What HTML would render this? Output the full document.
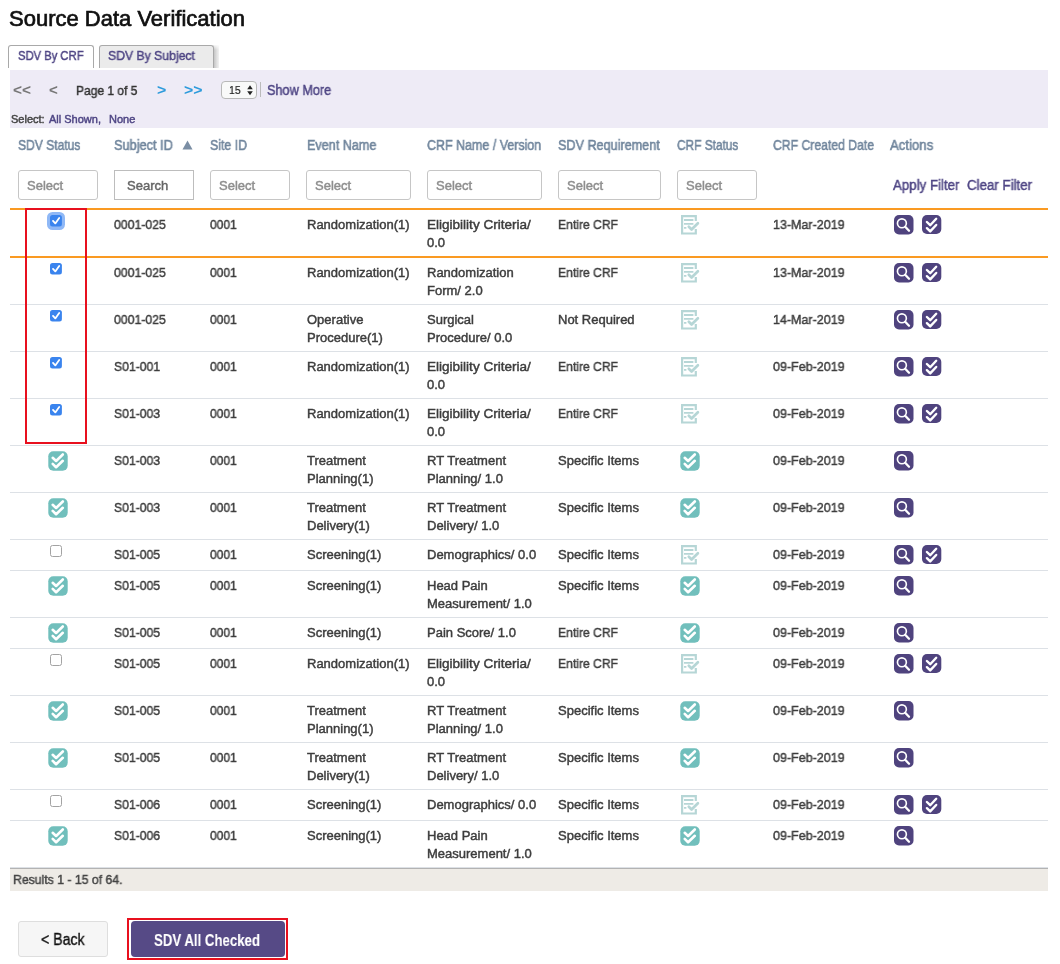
<!DOCTYPE html><html><head><meta charset="utf-8"><style>
html,body{margin:0;padding:0;background:#fff;width:1060px;height:964px;overflow:hidden;position:relative;font-family:"Liberation Sans", sans-serif;}
.t{position:absolute;white-space:nowrap;will-change:transform;}
.b{position:absolute;box-sizing:border-box;}
svg{position:absolute;}
</style></head><body>
<div class="t" style="left:8.6px;top:8.50px;font-size:22px;line-height:20px;color:#111;font-weight:400;-webkit-text-stroke:0.7px #111;">Source Data Verification</div>
<div class="b" style="left:8px;top:45px;width:86px;height:23px;background:#fff;border:1px solid #a9a9a9;border-bottom:none;border-radius:3px 3px 0 0;"></div>
<div class="t" style="left:17.8px;top:46.20px;font-size:13px;line-height:20px;color:#4e4584;font-weight:400;transform:scaleX(0.864);transform-origin:0 0;-webkit-text-stroke:0.45px #4e4584;">SDV By CRF</div>
<div class="b" style="left:213px;top:45px;width:6px;height:23px;background:linear-gradient(to right,#bcbcbc,#dedede 60%,#f2f2f2);"></div>
<div class="b" style="left:213px;top:45px;width:6px;height:5px;background:linear-gradient(to bottom,rgba(255,255,255,0.85),rgba(255,255,255,0));"></div>
<div class="b" style="left:99px;top:45px;width:115px;height:23px;background:#ebebeb;border:1px solid #a9a9a9;border-bottom:none;border-radius:3px 3px 0 0;"></div>
<div class="t" style="left:108.3px;top:46.20px;font-size:13px;line-height:20px;color:#4e4584;font-weight:400;transform:scaleX(0.94);transform-origin:0 0;-webkit-text-stroke:0.45px #4e4584;">SDV By Subject</div>
<div class="b" style="left:10px;top:70px;width:1038px;height:58px;background:#eeebf6;"></div>
<div class="t" style="left:12.7px;top:80.00px;font-size:14px;line-height:20px;color:#777;font-weight:700;transform:scaleX(1.1003);transform-origin:0 0;">&lt;&lt;</div>
<div class="t" style="left:49.1px;top:80.00px;font-size:14px;line-height:20px;color:#777;font-weight:700;transform:scaleX(1.0748);transform-origin:0 0;">&lt;</div>
<div class="t" style="left:76.4px;top:80.50px;font-size:13px;line-height:20px;color:#333;font-weight:400;transform:scaleX(0.923);transform-origin:0 0;-webkit-text-stroke:0.45px #333;">Page 1 of 5</div>
<div class="t" style="left:156.6px;top:80.00px;font-size:14px;line-height:20px;color:#2d9bdc;font-weight:700;transform:scaleX(1.1359);transform-origin:0 0;">&gt;</div>
<div class="t" style="left:183.6px;top:80.00px;font-size:14px;line-height:20px;color:#2d9bdc;font-weight:700;transform:scaleX(1.1309);transform-origin:0 0;">&gt;&gt;</div>
<div class="b" style="left:220.5px;top:81px;width:36px;height:17.5px;background:#f9f9f9;border:1px solid #b8b8b8;border-radius:4px;"></div>
<div class="t" style="left:229px;top:79.80px;font-size:11.5px;line-height:20px;color:#222;font-weight:400;transform:scaleX(0.9065);transform-origin:0 0;-webkit-text-stroke:0.2px #222;">15</div>
<svg style="left:246.5px;top:84.5px" width="7" height="11" viewBox="0 0 7 11"><path d="M3 0.3 L5.8 4.2 L0.2 4.2Z M3 10.3 L5.8 6.2 L0.2 6.2Z" fill="#222"/></svg>
<div class="b" style="left:260px;top:82px;width:1px;height:15px;background:#bbb;"></div>
<div class="t" style="left:267px;top:80.00px;font-size:14px;line-height:20px;color:#4e4584;font-weight:400;transform:scaleX(0.907);transform-origin:0 0;-webkit-text-stroke:0.45px #4e4584;">Show More</div>
<div class="t" style="left:10.6px;top:109.10px;font-size:11px;line-height:20px;color:#444;font-weight:400;-webkit-text-stroke:0.45px #444;">Select:</div>
<div class="t" style="left:48.6px;top:109.10px;font-size:11px;line-height:20px;color:#4e4584;font-weight:400;-webkit-text-stroke:0.45px #4e4584;">All Shown,</div>
<div class="t" style="left:109.2px;top:109.10px;font-size:11px;line-height:20px;color:#4e4584;font-weight:400;-webkit-text-stroke:0.45px #4e4584;">None</div>
<div class="t" style="left:18.15px;top:135.20px;font-size:14px;line-height:20px;color:#71869d;font-weight:400;transform:scaleX(0.8622);transform-origin:0 0;-webkit-text-stroke:0.55px #71869d;">SDV Status</div>
<div class="t" style="left:114.2px;top:135.20px;font-size:14px;line-height:20px;color:#71869d;font-weight:400;transform:scaleX(0.9119);transform-origin:0 0;-webkit-text-stroke:0.55px #71869d;">Subject ID</div>
<div class="t" style="left:210.2px;top:135.20px;font-size:14px;line-height:20px;color:#71869d;font-weight:400;transform:scaleX(0.8806);transform-origin:0 0;-webkit-text-stroke:0.55px #71869d;">Site ID</div>
<div class="t" style="left:306.8px;top:135.20px;font-size:14px;line-height:20px;color:#71869d;font-weight:400;transform:scaleX(0.9008);transform-origin:0 0;-webkit-text-stroke:0.55px #71869d;">Event Name</div>
<div class="t" style="left:426.6px;top:135.20px;font-size:14px;line-height:20px;color:#71869d;font-weight:400;transform:scaleX(0.8896);transform-origin:0 0;-webkit-text-stroke:0.55px #71869d;">CRF Name / Version</div>
<div class="t" style="left:558.3px;top:135.20px;font-size:14px;line-height:20px;color:#71869d;font-weight:400;transform:scaleX(0.9014);transform-origin:0 0;-webkit-text-stroke:0.55px #71869d;">SDV Requirement</div>
<div class="t" style="left:677.2px;top:135.20px;font-size:14px;line-height:20px;color:#71869d;font-weight:400;transform:scaleX(0.8472);transform-origin:0 0;-webkit-text-stroke:0.55px #71869d;">CRF Status</div>
<div class="t" style="left:772.6px;top:135.20px;font-size:14px;line-height:20px;color:#71869d;font-weight:400;transform:scaleX(0.8712);transform-origin:0 0;-webkit-text-stroke:0.55px #71869d;">CRF Created Date</div>
<div class="t" style="left:890px;top:135.20px;font-size:14px;line-height:20px;color:#71869d;font-weight:400;transform:scaleX(0.9407);transform-origin:0 0;-webkit-text-stroke:0.55px #71869d;">Actions</div>
<svg style="left:182px;top:140px" width="11" height="10" viewBox="0 0 11 10"><path d="M5.5 0.5 L10.5 9.5 L0.5 9.5Z" fill="#7b8ea4"/></svg>
<div class="b" style="left:18px;top:170px;width:80px;height:30px;background:#fff;border:1px solid #c6c6c6;border-radius:3px;"></div>
<div class="t" style="left:27px;top:176.00px;font-size:13px;line-height:20px;color:#8e8e8e;font-weight:400;-webkit-text-stroke:0.45px #8e8e8e;">Select</div>
<div class="b" style="left:114px;top:170px;width:80px;height:30px;background:#fff;border:1px solid #bdbdbd;"></div>
<div class="t" style="left:127px;top:175.50px;font-size:13px;line-height:20px;color:#666;font-weight:400;-webkit-text-stroke:0.45px #666;">Search</div>
<div class="b" style="left:210px;top:170px;width:80px;height:30px;background:#fff;border:1px solid #c6c6c6;border-radius:3px;"></div>
<div class="t" style="left:219px;top:176.00px;font-size:13px;line-height:20px;color:#8e8e8e;font-weight:400;-webkit-text-stroke:0.45px #8e8e8e;">Select</div>
<div class="b" style="left:306px;top:170px;width:105px;height:30px;background:#fff;border:1px solid #c6c6c6;border-radius:3px;"></div>
<div class="t" style="left:315px;top:176.00px;font-size:13px;line-height:20px;color:#8e8e8e;font-weight:400;-webkit-text-stroke:0.45px #8e8e8e;">Select</div>
<div class="b" style="left:427px;top:170px;width:115px;height:30px;background:#fff;border:1px solid #c6c6c6;border-radius:3px;"></div>
<div class="t" style="left:436px;top:176.00px;font-size:13px;line-height:20px;color:#8e8e8e;font-weight:400;-webkit-text-stroke:0.45px #8e8e8e;">Select</div>
<div class="b" style="left:558px;top:170px;width:103px;height:30px;background:#fff;border:1px solid #c6c6c6;border-radius:3px;"></div>
<div class="t" style="left:567px;top:176.00px;font-size:13px;line-height:20px;color:#8e8e8e;font-weight:400;-webkit-text-stroke:0.45px #8e8e8e;">Select</div>
<div class="b" style="left:677px;top:170px;width:80px;height:30px;background:#fff;border:1px solid #c6c6c6;border-radius:3px;"></div>
<div class="t" style="left:686px;top:176.00px;font-size:13px;line-height:20px;color:#8e8e8e;font-weight:400;-webkit-text-stroke:0.45px #8e8e8e;">Select</div>
<div class="t" style="left:892.5px;top:175.40px;font-size:14px;line-height:20px;color:#4e4584;font-weight:400;transform:scaleX(0.949);transform-origin:0 0;-webkit-text-stroke:0.45px #4e4584;">Apply Filter</div>
<div class="t" style="left:967.3px;top:175.40px;font-size:14px;line-height:20px;color:#4e4584;font-weight:400;transform:scaleX(0.95);transform-origin:0 0;-webkit-text-stroke:0.45px #4e4584;">Clear Filter</div>
<div class="b" style="left:47.1px;top:212.2px;width:18px;height:18px;background:#8fb8f6;border-radius:5.5px;"></div>
<svg style="left:50.2px;top:215.3px" width="12" height="12" viewBox="0 0 12 12"><rect x="0" y="0" width="11.9" height="11.6" rx="2.5" fill="#3a84ee"/><path d="M3 5.9 L5.3 8.4 L9.2 2.9" stroke="#fff" stroke-width="1.8" fill="none" stroke-linecap="round" stroke-linejoin="round"/></svg>
<div class="t" style="left:114.4px;top:214.50px;font-size:13px;line-height:20px;color:#3d3d3d;font-weight:400;transform:scaleX(0.9426);transform-origin:0 0;-webkit-text-stroke:0.45px #3d3d3d;">0001-025</div>
<div class="t" style="left:210.2px;top:214.50px;font-size:13px;line-height:20px;color:#3d3d3d;font-weight:400;transform:scaleX(0.9232);transform-origin:0 0;-webkit-text-stroke:0.45px #3d3d3d;">0001</div>
<div class="t" style="left:306.5px;top:214.50px;font-size:13px;line-height:20px;color:#3d3d3d;font-weight:400;-webkit-text-stroke:0.45px #3d3d3d;">Randomization(1)</div>
<div class="t" style="left:426.7px;top:214.50px;font-size:13px;line-height:20px;color:#3d3d3d;font-weight:400;transform:scaleX(1.0411);transform-origin:0 0;-webkit-text-stroke:0.45px #3d3d3d;">Eligibility Criteria/</div>
<div class="t" style="left:426.7px;top:232.50px;font-size:13px;line-height:20px;color:#3d3d3d;font-weight:400;-webkit-text-stroke:0.45px #3d3d3d;">0.0</div>
<div class="t" style="left:558px;top:214.50px;font-size:13px;line-height:20px;color:#3d3d3d;font-weight:400;transform:scaleX(0.9332);transform-origin:0 0;-webkit-text-stroke:0.45px #3d3d3d;">Entire CRF</div>
<svg style="left:681.3px;top:215.3px" width="20" height="20" viewBox="0 0 20 20"><path d="M14.8 6 V1.1 H1.1 V18.5 H14.8 V14" stroke="#b6d6d6" stroke-width="2.2" fill="none"/><path d="M3 5 H12.4 M3 8.9 H12.4 M3 12.8 H5.4" stroke="#b6d6d6" stroke-width="1.8"/><path d="M7.8 11.7 L10.6 14.5 L16.9 8.2" stroke="#b6d6d6" stroke-width="2.7" fill="none" stroke-linecap="round" stroke-linejoin="round"/></svg>
<div class="t" style="left:772.9px;top:214.50px;font-size:13px;line-height:20px;color:#3d3d3d;font-weight:400;transform:scaleX(0.9619);transform-origin:0 0;-webkit-text-stroke:0.45px #3d3d3d;">13-Mar-2019</div>
<svg style="left:894px;top:215.2px" width="20" height="20" viewBox="0 0 20 20"><rect x="0" y="0" width="19.5" height="19.5" rx="5" fill="#4f437e"/><circle cx="7.9" cy="8.3" r="4.45" stroke="#fff" stroke-width="1.65" fill="none"/><path d="M11.2 11.8 L15 15.7" stroke="#fff" stroke-width="2.3" stroke-linecap="round"/></svg>
<svg style="left:922.4px;top:215.2px" width="20" height="20" viewBox="0 0 20 20"><rect x="0" y="0" width="19.3" height="19" rx="5" fill="#4f437e"/><path d="M4.9 7 L8.2 10.2 L14.2 3.8 M4.9 13.2 L8.2 16.4 L14.2 10" stroke="#fff" stroke-width="2.4" fill="none" stroke-linecap="round" stroke-linejoin="round"/></svg>
<svg style="left:50.2px;top:263.3px" width="12" height="12" viewBox="0 0 12 12"><rect x="0" y="0" width="11.9" height="11.6" rx="2.5" fill="#3a84ee"/><path d="M3 5.9 L5.3 8.4 L9.2 2.9" stroke="#fff" stroke-width="1.8" fill="none" stroke-linecap="round" stroke-linejoin="round"/></svg>
<div class="t" style="left:114.4px;top:262.50px;font-size:13px;line-height:20px;color:#3d3d3d;font-weight:400;transform:scaleX(0.9426);transform-origin:0 0;-webkit-text-stroke:0.45px #3d3d3d;">0001-025</div>
<div class="t" style="left:210.2px;top:262.50px;font-size:13px;line-height:20px;color:#3d3d3d;font-weight:400;transform:scaleX(0.9232);transform-origin:0 0;-webkit-text-stroke:0.45px #3d3d3d;">0001</div>
<div class="t" style="left:306.5px;top:262.50px;font-size:13px;line-height:20px;color:#3d3d3d;font-weight:400;-webkit-text-stroke:0.45px #3d3d3d;">Randomization(1)</div>
<div class="t" style="left:426.7px;top:262.50px;font-size:13px;line-height:20px;color:#3d3d3d;font-weight:400;-webkit-text-stroke:0.45px #3d3d3d;">Randomization</div>
<div class="t" style="left:426.7px;top:280.50px;font-size:13px;line-height:20px;color:#3d3d3d;font-weight:400;-webkit-text-stroke:0.45px #3d3d3d;">Form/ 2.0</div>
<div class="t" style="left:558px;top:262.50px;font-size:13px;line-height:20px;color:#3d3d3d;font-weight:400;transform:scaleX(0.9332);transform-origin:0 0;-webkit-text-stroke:0.45px #3d3d3d;">Entire CRF</div>
<svg style="left:681.3px;top:263.3px" width="20" height="20" viewBox="0 0 20 20"><path d="M14.8 6 V1.1 H1.1 V18.5 H14.8 V14" stroke="#b6d6d6" stroke-width="2.2" fill="none"/><path d="M3 5 H12.4 M3 8.9 H12.4 M3 12.8 H5.4" stroke="#b6d6d6" stroke-width="1.8"/><path d="M7.8 11.7 L10.6 14.5 L16.9 8.2" stroke="#b6d6d6" stroke-width="2.7" fill="none" stroke-linecap="round" stroke-linejoin="round"/></svg>
<div class="t" style="left:772.9px;top:262.50px;font-size:13px;line-height:20px;color:#3d3d3d;font-weight:400;transform:scaleX(0.9619);transform-origin:0 0;-webkit-text-stroke:0.45px #3d3d3d;">13-Mar-2019</div>
<svg style="left:894px;top:263.2px" width="20" height="20" viewBox="0 0 20 20"><rect x="0" y="0" width="19.5" height="19.5" rx="5" fill="#4f437e"/><circle cx="7.9" cy="8.3" r="4.45" stroke="#fff" stroke-width="1.65" fill="none"/><path d="M11.2 11.8 L15 15.7" stroke="#fff" stroke-width="2.3" stroke-linecap="round"/></svg>
<svg style="left:922.4px;top:263.2px" width="20" height="20" viewBox="0 0 20 20"><rect x="0" y="0" width="19.3" height="19" rx="5" fill="#4f437e"/><path d="M4.9 7 L8.2 10.2 L14.2 3.8 M4.9 13.2 L8.2 16.4 L14.2 10" stroke="#fff" stroke-width="2.4" fill="none" stroke-linecap="round" stroke-linejoin="round"/></svg>
<svg style="left:50.2px;top:310.3px" width="12" height="12" viewBox="0 0 12 12"><rect x="0" y="0" width="11.9" height="11.6" rx="2.5" fill="#3a84ee"/><path d="M3 5.9 L5.3 8.4 L9.2 2.9" stroke="#fff" stroke-width="1.8" fill="none" stroke-linecap="round" stroke-linejoin="round"/></svg>
<div class="t" style="left:114.4px;top:309.50px;font-size:13px;line-height:20px;color:#3d3d3d;font-weight:400;transform:scaleX(0.9426);transform-origin:0 0;-webkit-text-stroke:0.45px #3d3d3d;">0001-025</div>
<div class="t" style="left:210.2px;top:309.50px;font-size:13px;line-height:20px;color:#3d3d3d;font-weight:400;transform:scaleX(0.9232);transform-origin:0 0;-webkit-text-stroke:0.45px #3d3d3d;">0001</div>
<div class="t" style="left:306.5px;top:309.50px;font-size:13px;line-height:20px;color:#3d3d3d;font-weight:400;-webkit-text-stroke:0.45px #3d3d3d;">Operative</div>
<div class="t" style="left:306.5px;top:327.50px;font-size:13px;line-height:20px;color:#3d3d3d;font-weight:400;-webkit-text-stroke:0.45px #3d3d3d;">Procedure(1)</div>
<div class="t" style="left:426.7px;top:309.50px;font-size:13px;line-height:20px;color:#3d3d3d;font-weight:400;-webkit-text-stroke:0.45px #3d3d3d;">Surgical</div>
<div class="t" style="left:426.7px;top:327.50px;font-size:13px;line-height:20px;color:#3d3d3d;font-weight:400;-webkit-text-stroke:0.45px #3d3d3d;">Procedure/ 0.0</div>
<div class="t" style="left:558px;top:309.50px;font-size:13px;line-height:20px;color:#3d3d3d;font-weight:400;-webkit-text-stroke:0.45px #3d3d3d;">Not Required</div>
<svg style="left:681.3px;top:310.3px" width="20" height="20" viewBox="0 0 20 20"><path d="M14.8 6 V1.1 H1.1 V18.5 H14.8 V14" stroke="#b6d6d6" stroke-width="2.2" fill="none"/><path d="M3 5 H12.4 M3 8.9 H12.4 M3 12.8 H5.4" stroke="#b6d6d6" stroke-width="1.8"/><path d="M7.8 11.7 L10.6 14.5 L16.9 8.2" stroke="#b6d6d6" stroke-width="2.7" fill="none" stroke-linecap="round" stroke-linejoin="round"/></svg>
<div class="t" style="left:772.9px;top:309.50px;font-size:13px;line-height:20px;color:#3d3d3d;font-weight:400;transform:scaleX(0.9619);transform-origin:0 0;-webkit-text-stroke:0.45px #3d3d3d;">14-Mar-2019</div>
<svg style="left:894px;top:310.2px" width="20" height="20" viewBox="0 0 20 20"><rect x="0" y="0" width="19.5" height="19.5" rx="5" fill="#4f437e"/><circle cx="7.9" cy="8.3" r="4.45" stroke="#fff" stroke-width="1.65" fill="none"/><path d="M11.2 11.8 L15 15.7" stroke="#fff" stroke-width="2.3" stroke-linecap="round"/></svg>
<svg style="left:922.4px;top:310.2px" width="20" height="20" viewBox="0 0 20 20"><rect x="0" y="0" width="19.3" height="19" rx="5" fill="#4f437e"/><path d="M4.9 7 L8.2 10.2 L14.2 3.8 M4.9 13.2 L8.2 16.4 L14.2 10" stroke="#fff" stroke-width="2.4" fill="none" stroke-linecap="round" stroke-linejoin="round"/></svg>
<svg style="left:50.2px;top:357.3px" width="12" height="12" viewBox="0 0 12 12"><rect x="0" y="0" width="11.9" height="11.6" rx="2.5" fill="#3a84ee"/><path d="M3 5.9 L5.3 8.4 L9.2 2.9" stroke="#fff" stroke-width="1.8" fill="none" stroke-linecap="round" stroke-linejoin="round"/></svg>
<div class="t" style="left:114.4px;top:356.50px;font-size:13px;line-height:20px;color:#3d3d3d;font-weight:400;transform:scaleX(0.9358);transform-origin:0 0;-webkit-text-stroke:0.45px #3d3d3d;">S01-001</div>
<div class="t" style="left:210.2px;top:356.50px;font-size:13px;line-height:20px;color:#3d3d3d;font-weight:400;transform:scaleX(0.9232);transform-origin:0 0;-webkit-text-stroke:0.45px #3d3d3d;">0001</div>
<div class="t" style="left:306.5px;top:356.50px;font-size:13px;line-height:20px;color:#3d3d3d;font-weight:400;-webkit-text-stroke:0.45px #3d3d3d;">Randomization(1)</div>
<div class="t" style="left:426.7px;top:356.50px;font-size:13px;line-height:20px;color:#3d3d3d;font-weight:400;transform:scaleX(1.0411);transform-origin:0 0;-webkit-text-stroke:0.45px #3d3d3d;">Eligibility Criteria/</div>
<div class="t" style="left:426.7px;top:374.50px;font-size:13px;line-height:20px;color:#3d3d3d;font-weight:400;-webkit-text-stroke:0.45px #3d3d3d;">0.0</div>
<div class="t" style="left:558px;top:356.50px;font-size:13px;line-height:20px;color:#3d3d3d;font-weight:400;transform:scaleX(0.9332);transform-origin:0 0;-webkit-text-stroke:0.45px #3d3d3d;">Entire CRF</div>
<svg style="left:681.3px;top:357.3px" width="20" height="20" viewBox="0 0 20 20"><path d="M14.8 6 V1.1 H1.1 V18.5 H14.8 V14" stroke="#b6d6d6" stroke-width="2.2" fill="none"/><path d="M3 5 H12.4 M3 8.9 H12.4 M3 12.8 H5.4" stroke="#b6d6d6" stroke-width="1.8"/><path d="M7.8 11.7 L10.6 14.5 L16.9 8.2" stroke="#b6d6d6" stroke-width="2.7" fill="none" stroke-linecap="round" stroke-linejoin="round"/></svg>
<div class="t" style="left:772.9px;top:356.50px;font-size:13px;line-height:20px;color:#3d3d3d;font-weight:400;transform:scaleX(0.9617);transform-origin:0 0;-webkit-text-stroke:0.45px #3d3d3d;">09-Feb-2019</div>
<svg style="left:894px;top:357.2px" width="20" height="20" viewBox="0 0 20 20"><rect x="0" y="0" width="19.5" height="19.5" rx="5" fill="#4f437e"/><circle cx="7.9" cy="8.3" r="4.45" stroke="#fff" stroke-width="1.65" fill="none"/><path d="M11.2 11.8 L15 15.7" stroke="#fff" stroke-width="2.3" stroke-linecap="round"/></svg>
<svg style="left:922.4px;top:357.2px" width="20" height="20" viewBox="0 0 20 20"><rect x="0" y="0" width="19.3" height="19" rx="5" fill="#4f437e"/><path d="M4.9 7 L8.2 10.2 L14.2 3.8 M4.9 13.2 L8.2 16.4 L14.2 10" stroke="#fff" stroke-width="2.4" fill="none" stroke-linecap="round" stroke-linejoin="round"/></svg>
<svg style="left:50.2px;top:404.3px" width="12" height="12" viewBox="0 0 12 12"><rect x="0" y="0" width="11.9" height="11.6" rx="2.5" fill="#3a84ee"/><path d="M3 5.9 L5.3 8.4 L9.2 2.9" stroke="#fff" stroke-width="1.8" fill="none" stroke-linecap="round" stroke-linejoin="round"/></svg>
<div class="t" style="left:114.4px;top:403.50px;font-size:13px;line-height:20px;color:#3d3d3d;font-weight:400;transform:scaleX(0.9358);transform-origin:0 0;-webkit-text-stroke:0.45px #3d3d3d;">S01-003</div>
<div class="t" style="left:210.2px;top:403.50px;font-size:13px;line-height:20px;color:#3d3d3d;font-weight:400;transform:scaleX(0.9232);transform-origin:0 0;-webkit-text-stroke:0.45px #3d3d3d;">0001</div>
<div class="t" style="left:306.5px;top:403.50px;font-size:13px;line-height:20px;color:#3d3d3d;font-weight:400;-webkit-text-stroke:0.45px #3d3d3d;">Randomization(1)</div>
<div class="t" style="left:426.7px;top:403.50px;font-size:13px;line-height:20px;color:#3d3d3d;font-weight:400;transform:scaleX(1.0411);transform-origin:0 0;-webkit-text-stroke:0.45px #3d3d3d;">Eligibility Criteria/</div>
<div class="t" style="left:426.7px;top:421.50px;font-size:13px;line-height:20px;color:#3d3d3d;font-weight:400;-webkit-text-stroke:0.45px #3d3d3d;">0.0</div>
<div class="t" style="left:558px;top:403.50px;font-size:13px;line-height:20px;color:#3d3d3d;font-weight:400;transform:scaleX(0.9332);transform-origin:0 0;-webkit-text-stroke:0.45px #3d3d3d;">Entire CRF</div>
<svg style="left:681.3px;top:404.3px" width="20" height="20" viewBox="0 0 20 20"><path d="M14.8 6 V1.1 H1.1 V18.5 H14.8 V14" stroke="#b6d6d6" stroke-width="2.2" fill="none"/><path d="M3 5 H12.4 M3 8.9 H12.4 M3 12.8 H5.4" stroke="#b6d6d6" stroke-width="1.8"/><path d="M7.8 11.7 L10.6 14.5 L16.9 8.2" stroke="#b6d6d6" stroke-width="2.7" fill="none" stroke-linecap="round" stroke-linejoin="round"/></svg>
<div class="t" style="left:772.9px;top:403.50px;font-size:13px;line-height:20px;color:#3d3d3d;font-weight:400;transform:scaleX(0.9617);transform-origin:0 0;-webkit-text-stroke:0.45px #3d3d3d;">09-Feb-2019</div>
<svg style="left:894px;top:404.2px" width="20" height="20" viewBox="0 0 20 20"><rect x="0" y="0" width="19.5" height="19.5" rx="5" fill="#4f437e"/><circle cx="7.9" cy="8.3" r="4.45" stroke="#fff" stroke-width="1.65" fill="none"/><path d="M11.2 11.8 L15 15.7" stroke="#fff" stroke-width="2.3" stroke-linecap="round"/></svg>
<svg style="left:922.4px;top:404.2px" width="20" height="20" viewBox="0 0 20 20"><rect x="0" y="0" width="19.3" height="19" rx="5" fill="#4f437e"/><path d="M4.9 7 L8.2 10.2 L14.2 3.8 M4.9 13.2 L8.2 16.4 L14.2 10" stroke="#fff" stroke-width="2.4" fill="none" stroke-linecap="round" stroke-linejoin="round"/></svg>
<svg style="left:47.9px;top:451px" width="20" height="20" viewBox="0 0 20 20"><rect x="0.3" y="0.3" width="19.4" height="19.4" rx="5" fill="#71bfbc"/><path d="M4.7 6.8 L8.1 10 L14.8 3.5 M4.7 12.9 L8.1 16.2 L14.8 9.8" stroke="#fff" stroke-width="2.6" fill="none" stroke-linecap="round" stroke-linejoin="round"/></svg>
<div class="t" style="left:114.4px;top:450.50px;font-size:13px;line-height:20px;color:#3d3d3d;font-weight:400;transform:scaleX(0.9358);transform-origin:0 0;-webkit-text-stroke:0.45px #3d3d3d;">S01-003</div>
<div class="t" style="left:210.2px;top:450.50px;font-size:13px;line-height:20px;color:#3d3d3d;font-weight:400;transform:scaleX(0.9232);transform-origin:0 0;-webkit-text-stroke:0.45px #3d3d3d;">0001</div>
<div class="t" style="left:306.5px;top:450.50px;font-size:13px;line-height:20px;color:#3d3d3d;font-weight:400;-webkit-text-stroke:0.45px #3d3d3d;">Treatment</div>
<div class="t" style="left:306.5px;top:468.50px;font-size:13px;line-height:20px;color:#3d3d3d;font-weight:400;-webkit-text-stroke:0.45px #3d3d3d;">Planning(1)</div>
<div class="t" style="left:426.7px;top:450.50px;font-size:13px;line-height:20px;color:#3d3d3d;font-weight:400;-webkit-text-stroke:0.45px #3d3d3d;">RT Treatment</div>
<div class="t" style="left:426.7px;top:468.50px;font-size:13px;line-height:20px;color:#3d3d3d;font-weight:400;-webkit-text-stroke:0.45px #3d3d3d;">Planning/ 1.0</div>
<div class="t" style="left:558px;top:450.50px;font-size:13px;line-height:20px;color:#3d3d3d;font-weight:400;-webkit-text-stroke:0.45px #3d3d3d;">Specific Items</div>
<svg style="left:680px;top:451px" width="20" height="20" viewBox="0 0 20 20"><rect x="0.3" y="0.3" width="19.4" height="19.4" rx="5" fill="#71bfbc"/><path d="M4.7 6.8 L8.1 10 L14.8 3.5 M4.7 12.9 L8.1 16.2 L14.8 9.8" stroke="#fff" stroke-width="2.6" fill="none" stroke-linecap="round" stroke-linejoin="round"/></svg>
<div class="t" style="left:772.9px;top:450.50px;font-size:13px;line-height:20px;color:#3d3d3d;font-weight:400;transform:scaleX(0.9617);transform-origin:0 0;-webkit-text-stroke:0.45px #3d3d3d;">09-Feb-2019</div>
<svg style="left:894px;top:451.2px" width="20" height="20" viewBox="0 0 20 20"><rect x="0" y="0" width="19.5" height="19.5" rx="5" fill="#4f437e"/><circle cx="7.9" cy="8.3" r="4.45" stroke="#fff" stroke-width="1.65" fill="none"/><path d="M11.2 11.8 L15 15.7" stroke="#fff" stroke-width="2.3" stroke-linecap="round"/></svg>
<svg style="left:47.9px;top:498px" width="20" height="20" viewBox="0 0 20 20"><rect x="0.3" y="0.3" width="19.4" height="19.4" rx="5" fill="#71bfbc"/><path d="M4.7 6.8 L8.1 10 L14.8 3.5 M4.7 12.9 L8.1 16.2 L14.8 9.8" stroke="#fff" stroke-width="2.6" fill="none" stroke-linecap="round" stroke-linejoin="round"/></svg>
<div class="t" style="left:114.4px;top:497.50px;font-size:13px;line-height:20px;color:#3d3d3d;font-weight:400;transform:scaleX(0.9358);transform-origin:0 0;-webkit-text-stroke:0.45px #3d3d3d;">S01-003</div>
<div class="t" style="left:210.2px;top:497.50px;font-size:13px;line-height:20px;color:#3d3d3d;font-weight:400;transform:scaleX(0.9232);transform-origin:0 0;-webkit-text-stroke:0.45px #3d3d3d;">0001</div>
<div class="t" style="left:306.5px;top:497.50px;font-size:13px;line-height:20px;color:#3d3d3d;font-weight:400;-webkit-text-stroke:0.45px #3d3d3d;">Treatment</div>
<div class="t" style="left:306.5px;top:515.50px;font-size:13px;line-height:20px;color:#3d3d3d;font-weight:400;-webkit-text-stroke:0.45px #3d3d3d;">Delivery(1)</div>
<div class="t" style="left:426.7px;top:497.50px;font-size:13px;line-height:20px;color:#3d3d3d;font-weight:400;-webkit-text-stroke:0.45px #3d3d3d;">RT Treatment</div>
<div class="t" style="left:426.7px;top:515.50px;font-size:13px;line-height:20px;color:#3d3d3d;font-weight:400;-webkit-text-stroke:0.45px #3d3d3d;">Delivery/ 1.0</div>
<div class="t" style="left:558px;top:497.50px;font-size:13px;line-height:20px;color:#3d3d3d;font-weight:400;-webkit-text-stroke:0.45px #3d3d3d;">Specific Items</div>
<svg style="left:680px;top:498px" width="20" height="20" viewBox="0 0 20 20"><rect x="0.3" y="0.3" width="19.4" height="19.4" rx="5" fill="#71bfbc"/><path d="M4.7 6.8 L8.1 10 L14.8 3.5 M4.7 12.9 L8.1 16.2 L14.8 9.8" stroke="#fff" stroke-width="2.6" fill="none" stroke-linecap="round" stroke-linejoin="round"/></svg>
<div class="t" style="left:772.9px;top:497.50px;font-size:13px;line-height:20px;color:#3d3d3d;font-weight:400;transform:scaleX(0.9617);transform-origin:0 0;-webkit-text-stroke:0.45px #3d3d3d;">09-Feb-2019</div>
<svg style="left:894px;top:498.2px" width="20" height="20" viewBox="0 0 20 20"><rect x="0" y="0" width="19.5" height="19.5" rx="5" fill="#4f437e"/><circle cx="7.9" cy="8.3" r="4.45" stroke="#fff" stroke-width="1.65" fill="none"/><path d="M11.2 11.8 L15 15.7" stroke="#fff" stroke-width="2.3" stroke-linecap="round"/></svg>
<div class="b" style="left:50.2px;top:545.3px;width:11.6px;height:11.6px;border:1px solid #a3a3a3;border-radius:2.5px;background:#fff;"></div>
<div class="t" style="left:114.4px;top:544.50px;font-size:13px;line-height:20px;color:#3d3d3d;font-weight:400;transform:scaleX(0.9358);transform-origin:0 0;-webkit-text-stroke:0.45px #3d3d3d;">S01-005</div>
<div class="t" style="left:210.2px;top:544.50px;font-size:13px;line-height:20px;color:#3d3d3d;font-weight:400;transform:scaleX(0.9232);transform-origin:0 0;-webkit-text-stroke:0.45px #3d3d3d;">0001</div>
<div class="t" style="left:306.5px;top:544.50px;font-size:13px;line-height:20px;color:#3d3d3d;font-weight:400;-webkit-text-stroke:0.45px #3d3d3d;">Screening(1)</div>
<div class="t" style="left:426.7px;top:544.50px;font-size:13px;line-height:20px;color:#3d3d3d;font-weight:400;-webkit-text-stroke:0.45px #3d3d3d;">Demographics/ 0.0</div>
<div class="t" style="left:558px;top:544.50px;font-size:13px;line-height:20px;color:#3d3d3d;font-weight:400;-webkit-text-stroke:0.45px #3d3d3d;">Specific Items</div>
<svg style="left:681.3px;top:545.3px" width="20" height="20" viewBox="0 0 20 20"><path d="M14.8 6 V1.1 H1.1 V18.5 H14.8 V14" stroke="#b6d6d6" stroke-width="2.2" fill="none"/><path d="M3 5 H12.4 M3 8.9 H12.4 M3 12.8 H5.4" stroke="#b6d6d6" stroke-width="1.8"/><path d="M7.8 11.7 L10.6 14.5 L16.9 8.2" stroke="#b6d6d6" stroke-width="2.7" fill="none" stroke-linecap="round" stroke-linejoin="round"/></svg>
<div class="t" style="left:772.9px;top:544.50px;font-size:13px;line-height:20px;color:#3d3d3d;font-weight:400;transform:scaleX(0.9617);transform-origin:0 0;-webkit-text-stroke:0.45px #3d3d3d;">09-Feb-2019</div>
<svg style="left:894px;top:545.2px" width="20" height="20" viewBox="0 0 20 20"><rect x="0" y="0" width="19.5" height="19.5" rx="5" fill="#4f437e"/><circle cx="7.9" cy="8.3" r="4.45" stroke="#fff" stroke-width="1.65" fill="none"/><path d="M11.2 11.8 L15 15.7" stroke="#fff" stroke-width="2.3" stroke-linecap="round"/></svg>
<svg style="left:922.4px;top:545.2px" width="20" height="20" viewBox="0 0 20 20"><rect x="0" y="0" width="19.3" height="19" rx="5" fill="#4f437e"/><path d="M4.9 7 L8.2 10.2 L14.2 3.8 M4.9 13.2 L8.2 16.4 L14.2 10" stroke="#fff" stroke-width="2.4" fill="none" stroke-linecap="round" stroke-linejoin="round"/></svg>
<svg style="left:47.9px;top:576px" width="20" height="20" viewBox="0 0 20 20"><rect x="0.3" y="0.3" width="19.4" height="19.4" rx="5" fill="#71bfbc"/><path d="M4.7 6.8 L8.1 10 L14.8 3.5 M4.7 12.9 L8.1 16.2 L14.8 9.8" stroke="#fff" stroke-width="2.6" fill="none" stroke-linecap="round" stroke-linejoin="round"/></svg>
<div class="t" style="left:114.4px;top:575.50px;font-size:13px;line-height:20px;color:#3d3d3d;font-weight:400;transform:scaleX(0.9358);transform-origin:0 0;-webkit-text-stroke:0.45px #3d3d3d;">S01-005</div>
<div class="t" style="left:210.2px;top:575.50px;font-size:13px;line-height:20px;color:#3d3d3d;font-weight:400;transform:scaleX(0.9232);transform-origin:0 0;-webkit-text-stroke:0.45px #3d3d3d;">0001</div>
<div class="t" style="left:306.5px;top:575.50px;font-size:13px;line-height:20px;color:#3d3d3d;font-weight:400;-webkit-text-stroke:0.45px #3d3d3d;">Screening(1)</div>
<div class="t" style="left:426.7px;top:575.50px;font-size:13px;line-height:20px;color:#3d3d3d;font-weight:400;-webkit-text-stroke:0.45px #3d3d3d;">Head Pain</div>
<div class="t" style="left:426.7px;top:593.50px;font-size:13px;line-height:20px;color:#3d3d3d;font-weight:400;-webkit-text-stroke:0.45px #3d3d3d;">Measurement/ 1.0</div>
<div class="t" style="left:558px;top:575.50px;font-size:13px;line-height:20px;color:#3d3d3d;font-weight:400;-webkit-text-stroke:0.45px #3d3d3d;">Specific Items</div>
<svg style="left:680px;top:576px" width="20" height="20" viewBox="0 0 20 20"><rect x="0.3" y="0.3" width="19.4" height="19.4" rx="5" fill="#71bfbc"/><path d="M4.7 6.8 L8.1 10 L14.8 3.5 M4.7 12.9 L8.1 16.2 L14.8 9.8" stroke="#fff" stroke-width="2.6" fill="none" stroke-linecap="round" stroke-linejoin="round"/></svg>
<div class="t" style="left:772.9px;top:575.50px;font-size:13px;line-height:20px;color:#3d3d3d;font-weight:400;transform:scaleX(0.9617);transform-origin:0 0;-webkit-text-stroke:0.45px #3d3d3d;">09-Feb-2019</div>
<svg style="left:894px;top:576.2px" width="20" height="20" viewBox="0 0 20 20"><rect x="0" y="0" width="19.5" height="19.5" rx="5" fill="#4f437e"/><circle cx="7.9" cy="8.3" r="4.45" stroke="#fff" stroke-width="1.65" fill="none"/><path d="M11.2 11.8 L15 15.7" stroke="#fff" stroke-width="2.3" stroke-linecap="round"/></svg>
<svg style="left:47.9px;top:623px" width="20" height="20" viewBox="0 0 20 20"><rect x="0.3" y="0.3" width="19.4" height="19.4" rx="5" fill="#71bfbc"/><path d="M4.7 6.8 L8.1 10 L14.8 3.5 M4.7 12.9 L8.1 16.2 L14.8 9.8" stroke="#fff" stroke-width="2.6" fill="none" stroke-linecap="round" stroke-linejoin="round"/></svg>
<div class="t" style="left:114.4px;top:622.50px;font-size:13px;line-height:20px;color:#3d3d3d;font-weight:400;transform:scaleX(0.9358);transform-origin:0 0;-webkit-text-stroke:0.45px #3d3d3d;">S01-005</div>
<div class="t" style="left:210.2px;top:622.50px;font-size:13px;line-height:20px;color:#3d3d3d;font-weight:400;transform:scaleX(0.9232);transform-origin:0 0;-webkit-text-stroke:0.45px #3d3d3d;">0001</div>
<div class="t" style="left:306.5px;top:622.50px;font-size:13px;line-height:20px;color:#3d3d3d;font-weight:400;-webkit-text-stroke:0.45px #3d3d3d;">Screening(1)</div>
<div class="t" style="left:426.7px;top:622.50px;font-size:13px;line-height:20px;color:#3d3d3d;font-weight:400;-webkit-text-stroke:0.45px #3d3d3d;">Pain Score/ 1.0</div>
<div class="t" style="left:558px;top:622.50px;font-size:13px;line-height:20px;color:#3d3d3d;font-weight:400;transform:scaleX(0.9332);transform-origin:0 0;-webkit-text-stroke:0.45px #3d3d3d;">Entire CRF</div>
<svg style="left:680px;top:623px" width="20" height="20" viewBox="0 0 20 20"><rect x="0.3" y="0.3" width="19.4" height="19.4" rx="5" fill="#71bfbc"/><path d="M4.7 6.8 L8.1 10 L14.8 3.5 M4.7 12.9 L8.1 16.2 L14.8 9.8" stroke="#fff" stroke-width="2.6" fill="none" stroke-linecap="round" stroke-linejoin="round"/></svg>
<div class="t" style="left:772.9px;top:622.50px;font-size:13px;line-height:20px;color:#3d3d3d;font-weight:400;transform:scaleX(0.9617);transform-origin:0 0;-webkit-text-stroke:0.45px #3d3d3d;">09-Feb-2019</div>
<svg style="left:894px;top:623.2px" width="20" height="20" viewBox="0 0 20 20"><rect x="0" y="0" width="19.5" height="19.5" rx="5" fill="#4f437e"/><circle cx="7.9" cy="8.3" r="4.45" stroke="#fff" stroke-width="1.65" fill="none"/><path d="M11.2 11.8 L15 15.7" stroke="#fff" stroke-width="2.3" stroke-linecap="round"/></svg>
<div class="b" style="left:50.2px;top:654.3px;width:11.6px;height:11.6px;border:1px solid #a3a3a3;border-radius:2.5px;background:#fff;"></div>
<div class="t" style="left:114.4px;top:653.50px;font-size:13px;line-height:20px;color:#3d3d3d;font-weight:400;transform:scaleX(0.9358);transform-origin:0 0;-webkit-text-stroke:0.45px #3d3d3d;">S01-005</div>
<div class="t" style="left:210.2px;top:653.50px;font-size:13px;line-height:20px;color:#3d3d3d;font-weight:400;transform:scaleX(0.9232);transform-origin:0 0;-webkit-text-stroke:0.45px #3d3d3d;">0001</div>
<div class="t" style="left:306.5px;top:653.50px;font-size:13px;line-height:20px;color:#3d3d3d;font-weight:400;-webkit-text-stroke:0.45px #3d3d3d;">Randomization(1)</div>
<div class="t" style="left:426.7px;top:653.50px;font-size:13px;line-height:20px;color:#3d3d3d;font-weight:400;transform:scaleX(1.0411);transform-origin:0 0;-webkit-text-stroke:0.45px #3d3d3d;">Eligibility Criteria/</div>
<div class="t" style="left:426.7px;top:671.50px;font-size:13px;line-height:20px;color:#3d3d3d;font-weight:400;-webkit-text-stroke:0.45px #3d3d3d;">0.0</div>
<div class="t" style="left:558px;top:653.50px;font-size:13px;line-height:20px;color:#3d3d3d;font-weight:400;transform:scaleX(0.9332);transform-origin:0 0;-webkit-text-stroke:0.45px #3d3d3d;">Entire CRF</div>
<svg style="left:681.3px;top:654.3px" width="20" height="20" viewBox="0 0 20 20"><path d="M14.8 6 V1.1 H1.1 V18.5 H14.8 V14" stroke="#b6d6d6" stroke-width="2.2" fill="none"/><path d="M3 5 H12.4 M3 8.9 H12.4 M3 12.8 H5.4" stroke="#b6d6d6" stroke-width="1.8"/><path d="M7.8 11.7 L10.6 14.5 L16.9 8.2" stroke="#b6d6d6" stroke-width="2.7" fill="none" stroke-linecap="round" stroke-linejoin="round"/></svg>
<div class="t" style="left:772.9px;top:653.50px;font-size:13px;line-height:20px;color:#3d3d3d;font-weight:400;transform:scaleX(0.9617);transform-origin:0 0;-webkit-text-stroke:0.45px #3d3d3d;">09-Feb-2019</div>
<svg style="left:894px;top:654.2px" width="20" height="20" viewBox="0 0 20 20"><rect x="0" y="0" width="19.5" height="19.5" rx="5" fill="#4f437e"/><circle cx="7.9" cy="8.3" r="4.45" stroke="#fff" stroke-width="1.65" fill="none"/><path d="M11.2 11.8 L15 15.7" stroke="#fff" stroke-width="2.3" stroke-linecap="round"/></svg>
<svg style="left:922.4px;top:654.2px" width="20" height="20" viewBox="0 0 20 20"><rect x="0" y="0" width="19.3" height="19" rx="5" fill="#4f437e"/><path d="M4.9 7 L8.2 10.2 L14.2 3.8 M4.9 13.2 L8.2 16.4 L14.2 10" stroke="#fff" stroke-width="2.4" fill="none" stroke-linecap="round" stroke-linejoin="round"/></svg>
<svg style="left:47.9px;top:701px" width="20" height="20" viewBox="0 0 20 20"><rect x="0.3" y="0.3" width="19.4" height="19.4" rx="5" fill="#71bfbc"/><path d="M4.7 6.8 L8.1 10 L14.8 3.5 M4.7 12.9 L8.1 16.2 L14.8 9.8" stroke="#fff" stroke-width="2.6" fill="none" stroke-linecap="round" stroke-linejoin="round"/></svg>
<div class="t" style="left:114.4px;top:700.50px;font-size:13px;line-height:20px;color:#3d3d3d;font-weight:400;transform:scaleX(0.9358);transform-origin:0 0;-webkit-text-stroke:0.45px #3d3d3d;">S01-005</div>
<div class="t" style="left:210.2px;top:700.50px;font-size:13px;line-height:20px;color:#3d3d3d;font-weight:400;transform:scaleX(0.9232);transform-origin:0 0;-webkit-text-stroke:0.45px #3d3d3d;">0001</div>
<div class="t" style="left:306.5px;top:700.50px;font-size:13px;line-height:20px;color:#3d3d3d;font-weight:400;-webkit-text-stroke:0.45px #3d3d3d;">Treatment</div>
<div class="t" style="left:306.5px;top:718.50px;font-size:13px;line-height:20px;color:#3d3d3d;font-weight:400;-webkit-text-stroke:0.45px #3d3d3d;">Planning(1)</div>
<div class="t" style="left:426.7px;top:700.50px;font-size:13px;line-height:20px;color:#3d3d3d;font-weight:400;-webkit-text-stroke:0.45px #3d3d3d;">RT Treatment</div>
<div class="t" style="left:426.7px;top:718.50px;font-size:13px;line-height:20px;color:#3d3d3d;font-weight:400;-webkit-text-stroke:0.45px #3d3d3d;">Planning/ 1.0</div>
<div class="t" style="left:558px;top:700.50px;font-size:13px;line-height:20px;color:#3d3d3d;font-weight:400;-webkit-text-stroke:0.45px #3d3d3d;">Specific Items</div>
<svg style="left:680px;top:701px" width="20" height="20" viewBox="0 0 20 20"><rect x="0.3" y="0.3" width="19.4" height="19.4" rx="5" fill="#71bfbc"/><path d="M4.7 6.8 L8.1 10 L14.8 3.5 M4.7 12.9 L8.1 16.2 L14.8 9.8" stroke="#fff" stroke-width="2.6" fill="none" stroke-linecap="round" stroke-linejoin="round"/></svg>
<div class="t" style="left:772.9px;top:700.50px;font-size:13px;line-height:20px;color:#3d3d3d;font-weight:400;transform:scaleX(0.9617);transform-origin:0 0;-webkit-text-stroke:0.45px #3d3d3d;">09-Feb-2019</div>
<svg style="left:894px;top:701.2px" width="20" height="20" viewBox="0 0 20 20"><rect x="0" y="0" width="19.5" height="19.5" rx="5" fill="#4f437e"/><circle cx="7.9" cy="8.3" r="4.45" stroke="#fff" stroke-width="1.65" fill="none"/><path d="M11.2 11.8 L15 15.7" stroke="#fff" stroke-width="2.3" stroke-linecap="round"/></svg>
<svg style="left:47.9px;top:748px" width="20" height="20" viewBox="0 0 20 20"><rect x="0.3" y="0.3" width="19.4" height="19.4" rx="5" fill="#71bfbc"/><path d="M4.7 6.8 L8.1 10 L14.8 3.5 M4.7 12.9 L8.1 16.2 L14.8 9.8" stroke="#fff" stroke-width="2.6" fill="none" stroke-linecap="round" stroke-linejoin="round"/></svg>
<div class="t" style="left:114.4px;top:747.50px;font-size:13px;line-height:20px;color:#3d3d3d;font-weight:400;transform:scaleX(0.9358);transform-origin:0 0;-webkit-text-stroke:0.45px #3d3d3d;">S01-005</div>
<div class="t" style="left:210.2px;top:747.50px;font-size:13px;line-height:20px;color:#3d3d3d;font-weight:400;transform:scaleX(0.9232);transform-origin:0 0;-webkit-text-stroke:0.45px #3d3d3d;">0001</div>
<div class="t" style="left:306.5px;top:747.50px;font-size:13px;line-height:20px;color:#3d3d3d;font-weight:400;-webkit-text-stroke:0.45px #3d3d3d;">Treatment</div>
<div class="t" style="left:306.5px;top:765.50px;font-size:13px;line-height:20px;color:#3d3d3d;font-weight:400;-webkit-text-stroke:0.45px #3d3d3d;">Delivery(1)</div>
<div class="t" style="left:426.7px;top:747.50px;font-size:13px;line-height:20px;color:#3d3d3d;font-weight:400;-webkit-text-stroke:0.45px #3d3d3d;">RT Treatment</div>
<div class="t" style="left:426.7px;top:765.50px;font-size:13px;line-height:20px;color:#3d3d3d;font-weight:400;-webkit-text-stroke:0.45px #3d3d3d;">Delivery/ 1.0</div>
<div class="t" style="left:558px;top:747.50px;font-size:13px;line-height:20px;color:#3d3d3d;font-weight:400;-webkit-text-stroke:0.45px #3d3d3d;">Specific Items</div>
<svg style="left:680px;top:748px" width="20" height="20" viewBox="0 0 20 20"><rect x="0.3" y="0.3" width="19.4" height="19.4" rx="5" fill="#71bfbc"/><path d="M4.7 6.8 L8.1 10 L14.8 3.5 M4.7 12.9 L8.1 16.2 L14.8 9.8" stroke="#fff" stroke-width="2.6" fill="none" stroke-linecap="round" stroke-linejoin="round"/></svg>
<div class="t" style="left:772.9px;top:747.50px;font-size:13px;line-height:20px;color:#3d3d3d;font-weight:400;transform:scaleX(0.9617);transform-origin:0 0;-webkit-text-stroke:0.45px #3d3d3d;">09-Feb-2019</div>
<svg style="left:894px;top:748.2px" width="20" height="20" viewBox="0 0 20 20"><rect x="0" y="0" width="19.5" height="19.5" rx="5" fill="#4f437e"/><circle cx="7.9" cy="8.3" r="4.45" stroke="#fff" stroke-width="1.65" fill="none"/><path d="M11.2 11.8 L15 15.7" stroke="#fff" stroke-width="2.3" stroke-linecap="round"/></svg>
<div class="b" style="left:50.2px;top:795.3px;width:11.6px;height:11.6px;border:1px solid #a3a3a3;border-radius:2.5px;background:#fff;"></div>
<div class="t" style="left:114.4px;top:794.50px;font-size:13px;line-height:20px;color:#3d3d3d;font-weight:400;transform:scaleX(0.9358);transform-origin:0 0;-webkit-text-stroke:0.45px #3d3d3d;">S01-006</div>
<div class="t" style="left:210.2px;top:794.50px;font-size:13px;line-height:20px;color:#3d3d3d;font-weight:400;transform:scaleX(0.9232);transform-origin:0 0;-webkit-text-stroke:0.45px #3d3d3d;">0001</div>
<div class="t" style="left:306.5px;top:794.50px;font-size:13px;line-height:20px;color:#3d3d3d;font-weight:400;-webkit-text-stroke:0.45px #3d3d3d;">Screening(1)</div>
<div class="t" style="left:426.7px;top:794.50px;font-size:13px;line-height:20px;color:#3d3d3d;font-weight:400;-webkit-text-stroke:0.45px #3d3d3d;">Demographics/ 0.0</div>
<div class="t" style="left:558px;top:794.50px;font-size:13px;line-height:20px;color:#3d3d3d;font-weight:400;-webkit-text-stroke:0.45px #3d3d3d;">Specific Items</div>
<svg style="left:681.3px;top:795.3px" width="20" height="20" viewBox="0 0 20 20"><path d="M14.8 6 V1.1 H1.1 V18.5 H14.8 V14" stroke="#b6d6d6" stroke-width="2.2" fill="none"/><path d="M3 5 H12.4 M3 8.9 H12.4 M3 12.8 H5.4" stroke="#b6d6d6" stroke-width="1.8"/><path d="M7.8 11.7 L10.6 14.5 L16.9 8.2" stroke="#b6d6d6" stroke-width="2.7" fill="none" stroke-linecap="round" stroke-linejoin="round"/></svg>
<div class="t" style="left:772.9px;top:794.50px;font-size:13px;line-height:20px;color:#3d3d3d;font-weight:400;transform:scaleX(0.9617);transform-origin:0 0;-webkit-text-stroke:0.45px #3d3d3d;">09-Feb-2019</div>
<svg style="left:894px;top:795.2px" width="20" height="20" viewBox="0 0 20 20"><rect x="0" y="0" width="19.5" height="19.5" rx="5" fill="#4f437e"/><circle cx="7.9" cy="8.3" r="4.45" stroke="#fff" stroke-width="1.65" fill="none"/><path d="M11.2 11.8 L15 15.7" stroke="#fff" stroke-width="2.3" stroke-linecap="round"/></svg>
<svg style="left:922.4px;top:795.2px" width="20" height="20" viewBox="0 0 20 20"><rect x="0" y="0" width="19.3" height="19" rx="5" fill="#4f437e"/><path d="M4.9 7 L8.2 10.2 L14.2 3.8 M4.9 13.2 L8.2 16.4 L14.2 10" stroke="#fff" stroke-width="2.4" fill="none" stroke-linecap="round" stroke-linejoin="round"/></svg>
<svg style="left:47.9px;top:826px" width="20" height="20" viewBox="0 0 20 20"><rect x="0.3" y="0.3" width="19.4" height="19.4" rx="5" fill="#71bfbc"/><path d="M4.7 6.8 L8.1 10 L14.8 3.5 M4.7 12.9 L8.1 16.2 L14.8 9.8" stroke="#fff" stroke-width="2.6" fill="none" stroke-linecap="round" stroke-linejoin="round"/></svg>
<div class="t" style="left:114.4px;top:825.50px;font-size:13px;line-height:20px;color:#3d3d3d;font-weight:400;transform:scaleX(0.9358);transform-origin:0 0;-webkit-text-stroke:0.45px #3d3d3d;">S01-006</div>
<div class="t" style="left:210.2px;top:825.50px;font-size:13px;line-height:20px;color:#3d3d3d;font-weight:400;transform:scaleX(0.9232);transform-origin:0 0;-webkit-text-stroke:0.45px #3d3d3d;">0001</div>
<div class="t" style="left:306.5px;top:825.50px;font-size:13px;line-height:20px;color:#3d3d3d;font-weight:400;-webkit-text-stroke:0.45px #3d3d3d;">Screening(1)</div>
<div class="t" style="left:426.7px;top:825.50px;font-size:13px;line-height:20px;color:#3d3d3d;font-weight:400;-webkit-text-stroke:0.45px #3d3d3d;">Head Pain</div>
<div class="t" style="left:426.7px;top:843.50px;font-size:13px;line-height:20px;color:#3d3d3d;font-weight:400;-webkit-text-stroke:0.45px #3d3d3d;">Measurement/ 1.0</div>
<div class="t" style="left:558px;top:825.50px;font-size:13px;line-height:20px;color:#3d3d3d;font-weight:400;-webkit-text-stroke:0.45px #3d3d3d;">Specific Items</div>
<svg style="left:680px;top:826px" width="20" height="20" viewBox="0 0 20 20"><rect x="0.3" y="0.3" width="19.4" height="19.4" rx="5" fill="#71bfbc"/><path d="M4.7 6.8 L8.1 10 L14.8 3.5 M4.7 12.9 L8.1 16.2 L14.8 9.8" stroke="#fff" stroke-width="2.6" fill="none" stroke-linecap="round" stroke-linejoin="round"/></svg>
<div class="t" style="left:772.9px;top:825.50px;font-size:13px;line-height:20px;color:#3d3d3d;font-weight:400;transform:scaleX(0.9617);transform-origin:0 0;-webkit-text-stroke:0.45px #3d3d3d;">09-Feb-2019</div>
<svg style="left:894px;top:826.2px" width="20" height="20" viewBox="0 0 20 20"><rect x="0" y="0" width="19.5" height="19.5" rx="5" fill="#4f437e"/><circle cx="7.9" cy="8.3" r="4.45" stroke="#fff" stroke-width="1.65" fill="none"/><path d="M11.2 11.8 L15 15.7" stroke="#fff" stroke-width="2.3" stroke-linecap="round"/></svg>
<div class="b" style="left:10px;top:208px;width:1038px;height:2px;background:#fa9a22;"></div>
<div class="b" style="left:10px;top:256px;width:1038px;height:2px;background:#fa9a22;"></div>
<div class="b" style="left:10px;top:304px;width:1038px;height:1px;background:#dde1e6;"></div>
<div class="b" style="left:10px;top:351px;width:1038px;height:1px;background:#dde1e6;"></div>
<div class="b" style="left:10px;top:398px;width:1038px;height:1px;background:#dde1e6;"></div>
<div class="b" style="left:10px;top:445px;width:1038px;height:1px;background:#dde1e6;"></div>
<div class="b" style="left:10px;top:492px;width:1038px;height:1px;background:#dde1e6;"></div>
<div class="b" style="left:10px;top:539px;width:1038px;height:1px;background:#dde1e6;"></div>
<div class="b" style="left:10px;top:570px;width:1038px;height:1px;background:#dde1e6;"></div>
<div class="b" style="left:10px;top:617px;width:1038px;height:1px;background:#dde1e6;"></div>
<div class="b" style="left:10px;top:648px;width:1038px;height:1px;background:#dde1e6;"></div>
<div class="b" style="left:10px;top:695px;width:1038px;height:1px;background:#dde1e6;"></div>
<div class="b" style="left:10px;top:742px;width:1038px;height:1px;background:#dde1e6;"></div>
<div class="b" style="left:10px;top:789px;width:1038px;height:1px;background:#dde1e6;"></div>
<div class="b" style="left:10px;top:820px;width:1038px;height:1px;background:#dde1e6;"></div>
<div class="b" style="left:25px;top:208px;width:62px;height:236px;border:2px solid #e8101e;"></div>
<div class="b" style="left:10px;top:867px;width:1038px;height:1px;background:#dde1e6;"></div>
<div class="b" style="left:10px;top:868px;width:1038px;height:23px;background:#eeebe6;border-top:1px solid #b3b3b3;"></div>
<div class="t" style="left:12.6px;top:870.40px;font-size:13px;line-height:20px;color:#444;font-weight:400;transform:scaleX(0.9412);transform-origin:0 0;-webkit-text-stroke:0.45px #444;">Results 1 - 15 of 64.</div>
<div class="b" style="left:18px;top:921px;width:90px;height:36px;background:#f6f6f6;border:1px solid #dedede;border-radius:3px;"></div>
<div class="t" style="left:40.8px;top:930.00px;font-size:16px;line-height:20px;color:#111;font-weight:400;transform:scaleX(0.8853);transform-origin:0 0;-webkit-text-stroke:0.35px #111;">&lt; Back</div>
<div class="b" style="left:127px;top:918px;width:161px;height:42px;border:2px solid #e8101e;"></div>
<div class="b" style="left:131px;top:921px;width:153.5px;height:35.8px;background:#564a86;border-radius:4px;"></div>
<div class="t" style="left:154px;top:929.70px;font-size:16.5px;line-height:20px;color:#fff;font-weight:700;transform:scaleX(0.8008);transform-origin:0 0;-webkit-text-stroke:0.1px #fff;">SDV All Checked</div>
</body></html>
